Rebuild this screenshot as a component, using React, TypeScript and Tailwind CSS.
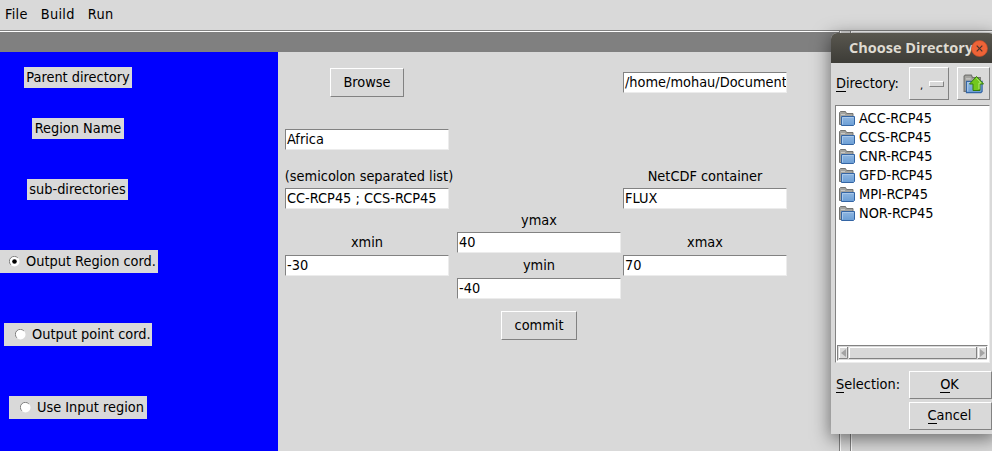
import React from "react";

type BoxProps = { className: string; children?: React.ReactNode };

function Label({ className, children }: BoxProps) {
  return <div className={`flex shrink-0 items-center justify-center whitespace-nowrap bg-[#d9d9d9] ${className}`}>{children}</div>;
}

function Field({ value, className }: { value: string; className: string }) {
  return (
    <div
      className={`flex h-[21px] w-[164px] shrink-0 items-start overflow-hidden whitespace-nowrap border border-[#ececec] border-l-[#828282] border-t-[#828282] bg-white pl-px leading-[18px] ${className}`}
    >
      {value}
    </div>
  );
}

function Button({ className, children }: BoxProps) {
  return (
    <button
      className={`flex shrink-0 items-center justify-center border border-[#828282] border-l-white border-t-white bg-[#d9d9d9] ${className}`}
    >
      {children}
    </button>
  );
}

function Radio({ label, checked, className }: { label: string; checked?: boolean; className: string }) {
  return (
    <div className={`flex h-[23px] shrink-0 items-center whitespace-nowrap bg-[#d9d9d9] pb-px ${className}`}>
      <svg width="11" height="11" viewBox="0 0 11 11" className="mr-[6px] shrink-0">
        <circle cx="5.5" cy="5.5" r="5" fill="#fff" />
        <path d="M1.8 8.8A4.8 4.8 0 0 1 8.8 1.8" fill="none" stroke="#828282" />
        {checked && <circle cx="5.5" cy="5.5" r="2.3" fill="#000" />}
      </svg>
      {label}
    </div>
  );
}

function FolderShape() {
  return (
    <>
      <path d="M.5 13.5v-12l1-1h5l1 2h6.5v11z" fill="#a3a39f" stroke="#747471" />
      <path d="M2 3.5h4M2 5.5h11" stroke="#c9c9c6" />
      <path d="M2.5 5.5h13v8l-1 1h-12z" fill="url(#folder)" stroke="#3465a4" />
      <path d="M3.5 13.5v-7h11" fill="none" stroke="#a9c8ea" />
    </>
  );
}

function Folder() {
  return (
    <svg width="16" height="15" viewBox="0 0 16 15" className="mr-1 shrink-0">
      <FolderShape />
    </svg>
  );
}

const folders = ["ACC-RCP45", "CCS-RCP45", "CNR-RCP45", "GFD-RCP45", "MPI-RCP45", "NOR-RCP45"];

function Key({ children }: { children: React.ReactNode }) {
  return <span className="border-b border-black leading-[15px]">{children}</span>;
}

function ChooseDirectory() {
  return (
    <div className="absolute left-[831px] top-[33px] flex h-[401px] w-[164px] flex-col rounded-t-[6px] bg-[#d9d9d9] shadow-[0_4px_18px_1px_rgba(0,0,0,0.5)]">
      <div className="flex h-[30px] shrink-0 items-center rounded-t-[6px] bg-linear-to-b from-[#59574f] to-[#3d3c37] pl-[18px]">
        <span className="w-[122px] whitespace-nowrap font-['Open_Sans',sans-serif] text-[14.5px] font-bold text-[#dfdbd2] [font-stretch:normal]">Choose Directory</span>
        <svg width="17" height="17" viewBox="0 0 17 17" className="shrink-0">
          <circle cx="8.5" cy="8.5" r="8" fill="#ee6337" stroke="#bd4d2b" strokeWidth=".7" />
          <path d="M5.7 5.7l5.6 5.6M11.3 5.7l-5.6 5.6" stroke="#47352f" strokeWidth="1.2" />
        </svg>
      </div>
      <div className="flex h-[42px] shrink-0 pl-[5px] pt-1">
        <span className="w-[73px] pt-[7px]"><Key>D</Key>irectory:</span>
        <Button className="h-[33px] w-10">
          <span className="w-[14px] pt-1 text-[11px]">,</span>
          <span className="h-[6px] w-[15px] border border-[#828282] border-l-white border-t-white" />
        </Button>
        <Button className="ml-2 h-[33px] w-[33px]">
          <svg width="22" height="20" viewBox="0 0 22 20">
            <g transform="translate(0.5 0.5) scale(1.2 1.25)"><FolderShape /></g>
            <path d="M13.5 2.5l7 7.5h-3.5v6.5h-7v-6.5h-3.5z" fill="#73c81e" stroke="#347d08" />
            <path d="M13.5 4.2l4.7 4.8h-2.2v6" fill="none" stroke="#b6ee75" />
          </svg>
        </Button>
      </div>
      <div className="ml-1 flex h-[258px] w-[155px] shrink-0 flex-col border border-[#ececec] border-l-[#828282] border-t-[#828282] bg-white pl-[3px] pt-[3px]">
        {folders.map((name) => (
          <div key={name} className="flex h-[19px] shrink-0 items-center whitespace-nowrap"><Folder /><span className="pb-[2px]">{name}</span></div>
        ))}
        <div className="-ml-[2px] mt-[122px] flex h-4 w-[151px] shrink-0 border border-white border-l-[#828282] border-t-[#828282] bg-[#d9d9d9]">
          <svg width="149" height="14" viewBox="0 0 149 14">
            <path d="M1.5 12V1.5h8.5M11.5 12V1.5h126.5M140.5 12V1.5h7.5" fill="none" stroke="#fff" />
            <path d="M1 12.5h8.5V1M11 12.5h127.5V1M140 12.5h8.5V1" fill="none" stroke="#828282" />
            <path d="M8 3v8L3 7z M142 3v8l5-4z" fill="#a3a3a3" />
          </svg>
        </div>
      </div>
      <div className="flex pl-[5px] pt-2">
        <span className="w-[73px] pt-[4px]"><Key>S</Key>election:</span>
        <div className="flex flex-col gap-[3px]">
          <Button className="h-7 w-[83px] pb-[2px] pr-[2px]"><span><Key>O</Key>K</span></Button>
          <Button className="h-7 w-[83px] pb-[2px] pr-[2px]"><span><Key>C</Key>ancel</span></Button>
        </div>
      </div>
    </div>
  );
}

export default function App() {
  return (
    <div className="relative flex h-[451px] w-[992px] flex-col overflow-hidden bg-[#d9d9d9] font-['DejaVu_Sans_Condensed','DejaVu_Sans',sans-serif] text-[14.4px] leading-[18px] text-black [font-stretch:condensed]">
      <svg width="0" height="0" className="absolute">
        <defs>
          <linearGradient id="folder" x1="0" y1="0" x2="0" y2="1">
            <stop stopColor="#90b7e1" />
            <stop offset="1" stopColor="#6b9ed5" />
          </linearGradient>
        </defs>
      </svg>
      <div className="flex h-[31px] shrink-0 gap-[13px] border-b border-[#828282] pl-[5px] pt-[5px] tracking-[0.3px]">
        <span>File</span><span>Build</span><span>Run</span>
      </div>
      <div className="flex min-h-0 grow">
        <div className="flex w-[839px] shrink-0 flex-col">
          <div className="h-[21px] shrink-0 border-t border-white bg-[#808080]" />
          <div className="flex grow">
            <div className="flex w-[278px] shrink-0 flex-col items-start bg-[#0000ff] pt-[15px]">
              <Label className="ml-6 h-[21px] w-[108px] pb-[2px]">Parent directory</Label>
              <Label className="ml-8 mt-[30px] h-[21px] w-[92px] pb-[2px]">Region Name</Label>
              <Label className="ml-[27px] mt-10 h-[21px] w-[101px] pb-[2px]">sub-directories</Label>
              <Radio className="mt-[50px] w-[158px] pl-[9px]" label="Output Region cord." checked />
              <Radio className="ml-1 mt-[50px] w-[148px] pl-[11px]" label="Output point cord." />
              <Radio className="ml-[9px] mt-[50px] w-[138px] pl-[11px]" label="Use Input region" />
            </div>
            <div className="flex flex-col pl-[7px] pt-4">
              <div className="flex h-[61px] items-start">
                <Button className="ml-[45px] h-[29px] w-[74px] pb-[2px]">Browse</Button>
                <Field className="ml-[219px] mt-1" value="/home/mohau/Document" />
              </div>
              <Field className="" value="Africa" />
              <div className="flex gap-2">
                <div className="flex w-[164px] flex-col">
                  <Label className="-ml-px mt-[17px] h-[18px] w-[170px]">(semicolon separated list)</Label>
                  <Field className="mt-[3px]" value="CC-RCP45 ; CCS-RCP45" />
                  <Label className="mt-6 h-[18px]">xmin</Label>
                  <Field className="mt-1" value="-30" />
                </div>
                <div className="flex w-[164px] flex-col items-center">
                  <Label className="mt-[61px] h-[18px]">ymax</Label>
                  <Field className="mt-[3px]" value="40" />
                  <Label className="mt-[3px] h-[18px]">ymin</Label>
                  <Field className="mt-1" value="-40" />
                  <Button className="mt-3 h-[29px] w-[76px] pb-[2px]">commit</Button>
                </div>
                <div className="-ml-[6px] flex w-[164px] flex-col">
                  <Label className="mt-[17px] h-[18px]">NetCDF container</Label>
                  <Field className="mt-[3px]" value="FLUX" />
                  <Label className="mt-6 h-[18px]">xmax</Label>
                  <Field className="mt-1" value="70" />
                </div>
              </div>
            </div>
          </div>
        </div>
        <div className="w-[12px] border-x border-[#828282] shadow-[inset_1px_0_0_white,1px_0_0_white]" />
        <div className="grow border-t border-white" />
      </div>
      <ChooseDirectory />
    </div>
  );
}
